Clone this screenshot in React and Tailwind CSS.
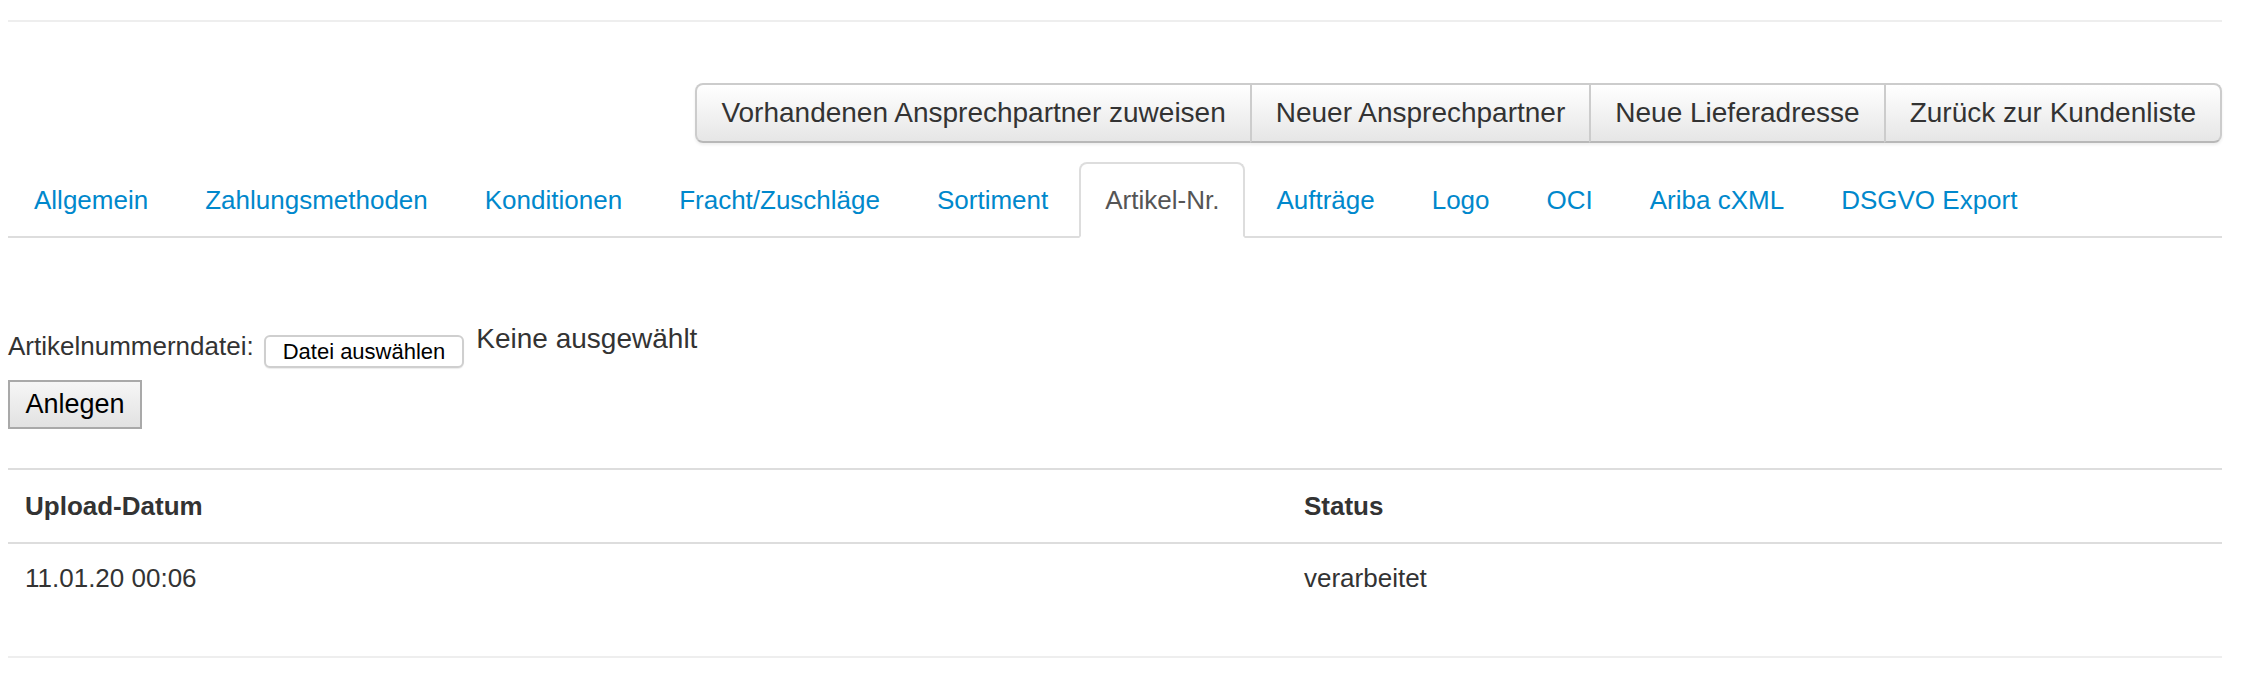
// App.jsx – Kunden-Detailansicht, Reiter "Artikel-Nr."

const ACTIONS = [
  'Vorhandenen Ansprechpartner zuweisen',
  'Neuer Ansprechpartner',
  'Neue Lieferadresse',
  'Zurück zur Kundenliste',
]

const TABS = [
  'Allgemein',
  'Zahlungsmethoden',
  'Konditionen',
  'Fracht/Zuschläge',
  'Sortiment',
  'Artikel-Nr.',
  'Aufträge',
  'Logo',
  'OCI',
  'Ariba cXML',
  'DSGVO Export',
]

const ACTIVE_TAB = 'Artikel-Nr.'

const UPLOADS = [{ date: '11.01.20 00:06', status: 'verarbeitet' }]

export default function App() {
  return (
    <div className="min-h-[690px] bg-white font-['Liberation_Sans',Arial,sans-serif] text-[#333]">
      <div className="ml-[8px] w-[2214px]">
        {/* Trennlinie oben */}
        <div className="pt-[20px]">
          <div className="border-t-2 border-[#eee]" />
        </div>

        {/* Aktionen */}
        <div className="mt-[61px] flex justify-end">
          <div className="flex shadow-[0_2px_3px_rgba(0,0,0,0.07)] rounded-[8px]">
            {ACTIONS.map((label, i) => (
              <button
                key={label}
                className={`px-6 py-2 text-[28px] leading-[40px] text-[#333] bg-linear-to-b from-white to-[#e6e6e6] border-2 border-[#ccc] border-b-[#b8b8b8] ${i > 0 ? '-ml-[2px]' : 'rounded-l-[8px]'} ${i === ACTIONS.length - 1 ? 'rounded-r-[8px]' : ''}`}
              >
                {label}
              </button>
            ))}
          </div>
        </div>

        {/* Reiter */}
        <ul className="mt-[19px] flex border-b-2 border-[#ddd]">
          {TABS.map((tab) => {
            const active = tab === ACTIVE_TAB
            return (
              <li key={tab} className="mr-[5px] -mb-[2px]">
                <span
                  className={`block px-6 py-4 text-[26px] leading-[40px] border-2 rounded-t-[8px] ${active ? 'text-[#555] bg-white border-[#ddd] border-b-white' : 'text-[#0088cc] border-transparent'}`}
                >
                  {tab}
                </span>
              </li>
            )
          })}
        </ul>

        {/* Upload-Formular */}
        <div className="mt-[85px] flex items-start h-[39px]">
          <span className="mt-[8px] text-[26px] leading-[30px] text-[#333]">Artikelnummerndatei:</span>
          <button className="ml-[10px] mt-[12px] h-[33px] px-[17px] text-[22px] leading-[29px] text-black bg-white border-2 border-[#cfcfcf] rounded-[6px] shadow-[0_1px_1px_rgba(0,0,0,0.08)]">
            Datei auswählen
          </button>
          <span className="ml-[12px] text-[28px] leading-[32px] text-[#333]">Keine ausgewählt</span>
        </div>
        <button className="mt-[18px] w-[134px] h-[49px] text-[27px] leading-[45px] text-black bg-linear-to-b from-[#f6f6f6] to-[#e2e2e2] border-2 border-[#a9a9a9]">
          Anlegen
        </button>

        {/* Upload-Liste */}
        <div className="mt-[39px] border-t-2 border-[#ddd]">
          <div className="grid grid-cols-[1279px_1fr] text-[26px] leading-[40px] font-bold">
            <div className="px-[17px] py-4">Upload-Datum</div>
            <div className="px-[17px] py-4">Status</div>
          </div>
          {UPLOADS.map((u) => (
            <div key={u.date} className="grid grid-cols-[1279px_1fr] text-[26px] leading-[40px] border-t-2 border-[#ddd]">
              <div className="px-[17px] pt-[14px] pb-[18px]">{u.date}</div>
              <div className="px-[17px] pt-[14px] pb-[18px]">{u.status}</div>
            </div>
          ))}
        </div>
        <div className="mt-[40px] border-t-2 border-[#eee]" />
      </div>
    </div>
  )
}
